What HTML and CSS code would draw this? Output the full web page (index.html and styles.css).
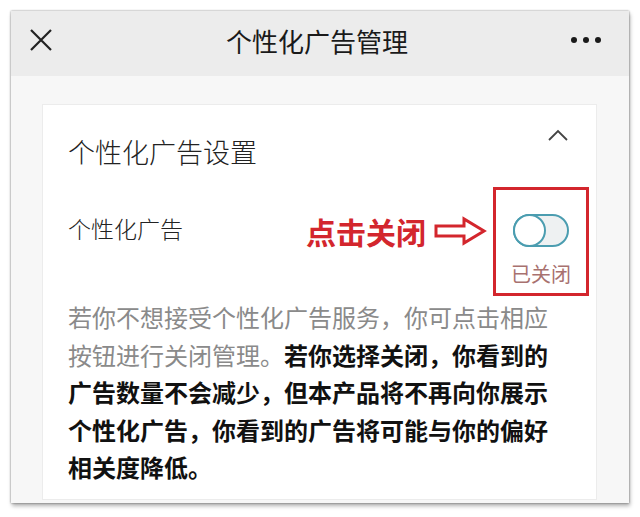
FILE: index.html
```html
<!DOCTYPE html>
<html>
<head>
    <meta charset="utf-8">
    <title>个性化广告管理</title>
    <link rel="stylesheet" href="styles.css">
</head>
<body>
    <div class="phone">
        <div class="header">
            <svg class="icon-close" width="24" height="24" viewBox="0 0 24 24">
                <path d="M2 2 L22 22 M22 2 L2 22" stroke="#222" stroke-width="2.2" fill="none"/>
            </svg>
            <div class="header-title">个性化广告管理</div>
            <div class="more">
                <span></span><span></span><span></span>
            </div>
        </div>

        <div class="content">
            <div class="card">
                <div class="card-head">
                    <div class="card-title">个性化广告设置</div>
                    <svg class="chevron" width="22" height="13" viewBox="0 0 22 13">
                        <path d="M2 12 L11 3 L20 12" stroke="#444" stroke-width="1.8" fill="none"/>
                    </svg>
                </div>

                <div class="setting-row">
                    <div class="setting-label">个性化广告</div>
                    <div class="hint">点击关闭</div>
                    <svg class="hint-arrow" width="54" height="30" viewBox="0 0 54 30">
                        <polygon points="2,10 30,10 30,3 50,15 30,27 30,20 2,20" stroke="#d3262d" stroke-width="3" fill="none" stroke-linejoin="miter"/>
                    </svg>
                    <div class="switch-box">
                        <div class="switch">
                            <div class="knob"></div>
                        </div>
                        <div class="switch-state">已关闭</div>
                    </div>
                </div>

                <p class="desc">
                    若你不想接受个性化广告服务，你可点击相应按钮进行关闭管理。<strong>若你选择关闭，你看到的广告数量不会减少，但本产品将不再向你展示个性化广告，你看到的广告将可能与你的偏好相关度降低。</strong>
                </p>
            </div>
        </div>
    </div>
</body>
</html>
```

FILE: styles.css
```css
body {
    margin: 0;
    background: #fff;
    font-family: "Noto Sans CJK SC", "Noto Sans", sans-serif;
}

.phone {
    margin: 11px;
    width: 618px;
    height: 492px;
    background: #f7f7f7;
    box-shadow: 0 0 2px rgba(0,0,0,0.45), 1px 3px 4px rgba(0,0,0,0.3);
    display: flex;
    flex-direction: column;
    overflow: hidden;
}

.header {
    height: 65px;
    flex-shrink: 0;
    background: #ececec;
    display: flex;
    align-items: center;
    padding: 0 28px 7px 18px;
    box-sizing: border-box;
}

.icon-close {
    width: 24px;
    height: 24px;
}

.header-title {
    flex: 1;
    text-align: center;
    font-size: 26px;
    color: #1a1a1a;
    margin-left: 10px;
}

.more {
    display: flex;
    gap: 6px;
}

.more span {
    width: 6px;
    height: 6px;
    border-radius: 50%;
    background: #1a1a1a;
}

.content {
    flex: 1;
    padding: 28px 32px 3px 31px;
    display: flex;
}

.card {
    flex: 1;
    background: #fff;
    border: 1px solid #ececec;
    padding: 29px 26px 0 25px;
}

.card-head {
    display: flex;
    justify-content: space-between;
    align-items: flex-start;
}

.card-title {
    font-size: 27px;
    font-weight: 300;
    line-height: 36px;
    color: #222;
}

.chevron {
    margin-top: -6px;
    margin-right: 1px;
}

.setting-row {
    display: flex;
    align-items: flex-start;
    margin-top: 17px;
    margin-right: -19px;
}

.setting-label {
    flex: 1;
    font-size: 23px;
    font-weight: 300;
    line-height: 32px;
    color: #222;
    margin-top: 25px;
}

.hint {
    font-size: 30px;
    font-weight: bold;
    line-height: 40px;
    color: #d3262d;
    margin-top: 24px;
}

.hint-arrow {
    margin: 29px 5px 0 8px;
}

.switch-box {
    width: 96px;
    height: 109px;
    box-sizing: border-box;
    border: 3px solid #d3262d;
    display: flex;
    flex-direction: column;
    align-items: center;
    padding-top: 24px;
}

.switch {
    width: 56px;
    height: 33px;
    box-sizing: border-box;
    border: 2px solid #4b9db0;
    border-radius: 17px;
    background: #eef1f2;
    position: relative;
}

.knob {
    position: absolute;
    left: -2px;
    top: -2px;
    width: 33px;
    height: 33px;
    box-sizing: border-box;
    border: 2px solid #4b9db0;
    border-radius: 50%;
    background: #fff;
}

.switch-state {
    margin-top: 14px;
    font-size: 20px;
    line-height: 26px;
    color: #a8716f;
}

.desc {
    margin: 2px 0 0;
    width: 484px;
    font-size: 24px;
    line-height: 37.5px;
    color: #8a8a8a;
}

.desc strong {
    color: #111;
    font-weight: bold;
}
```
